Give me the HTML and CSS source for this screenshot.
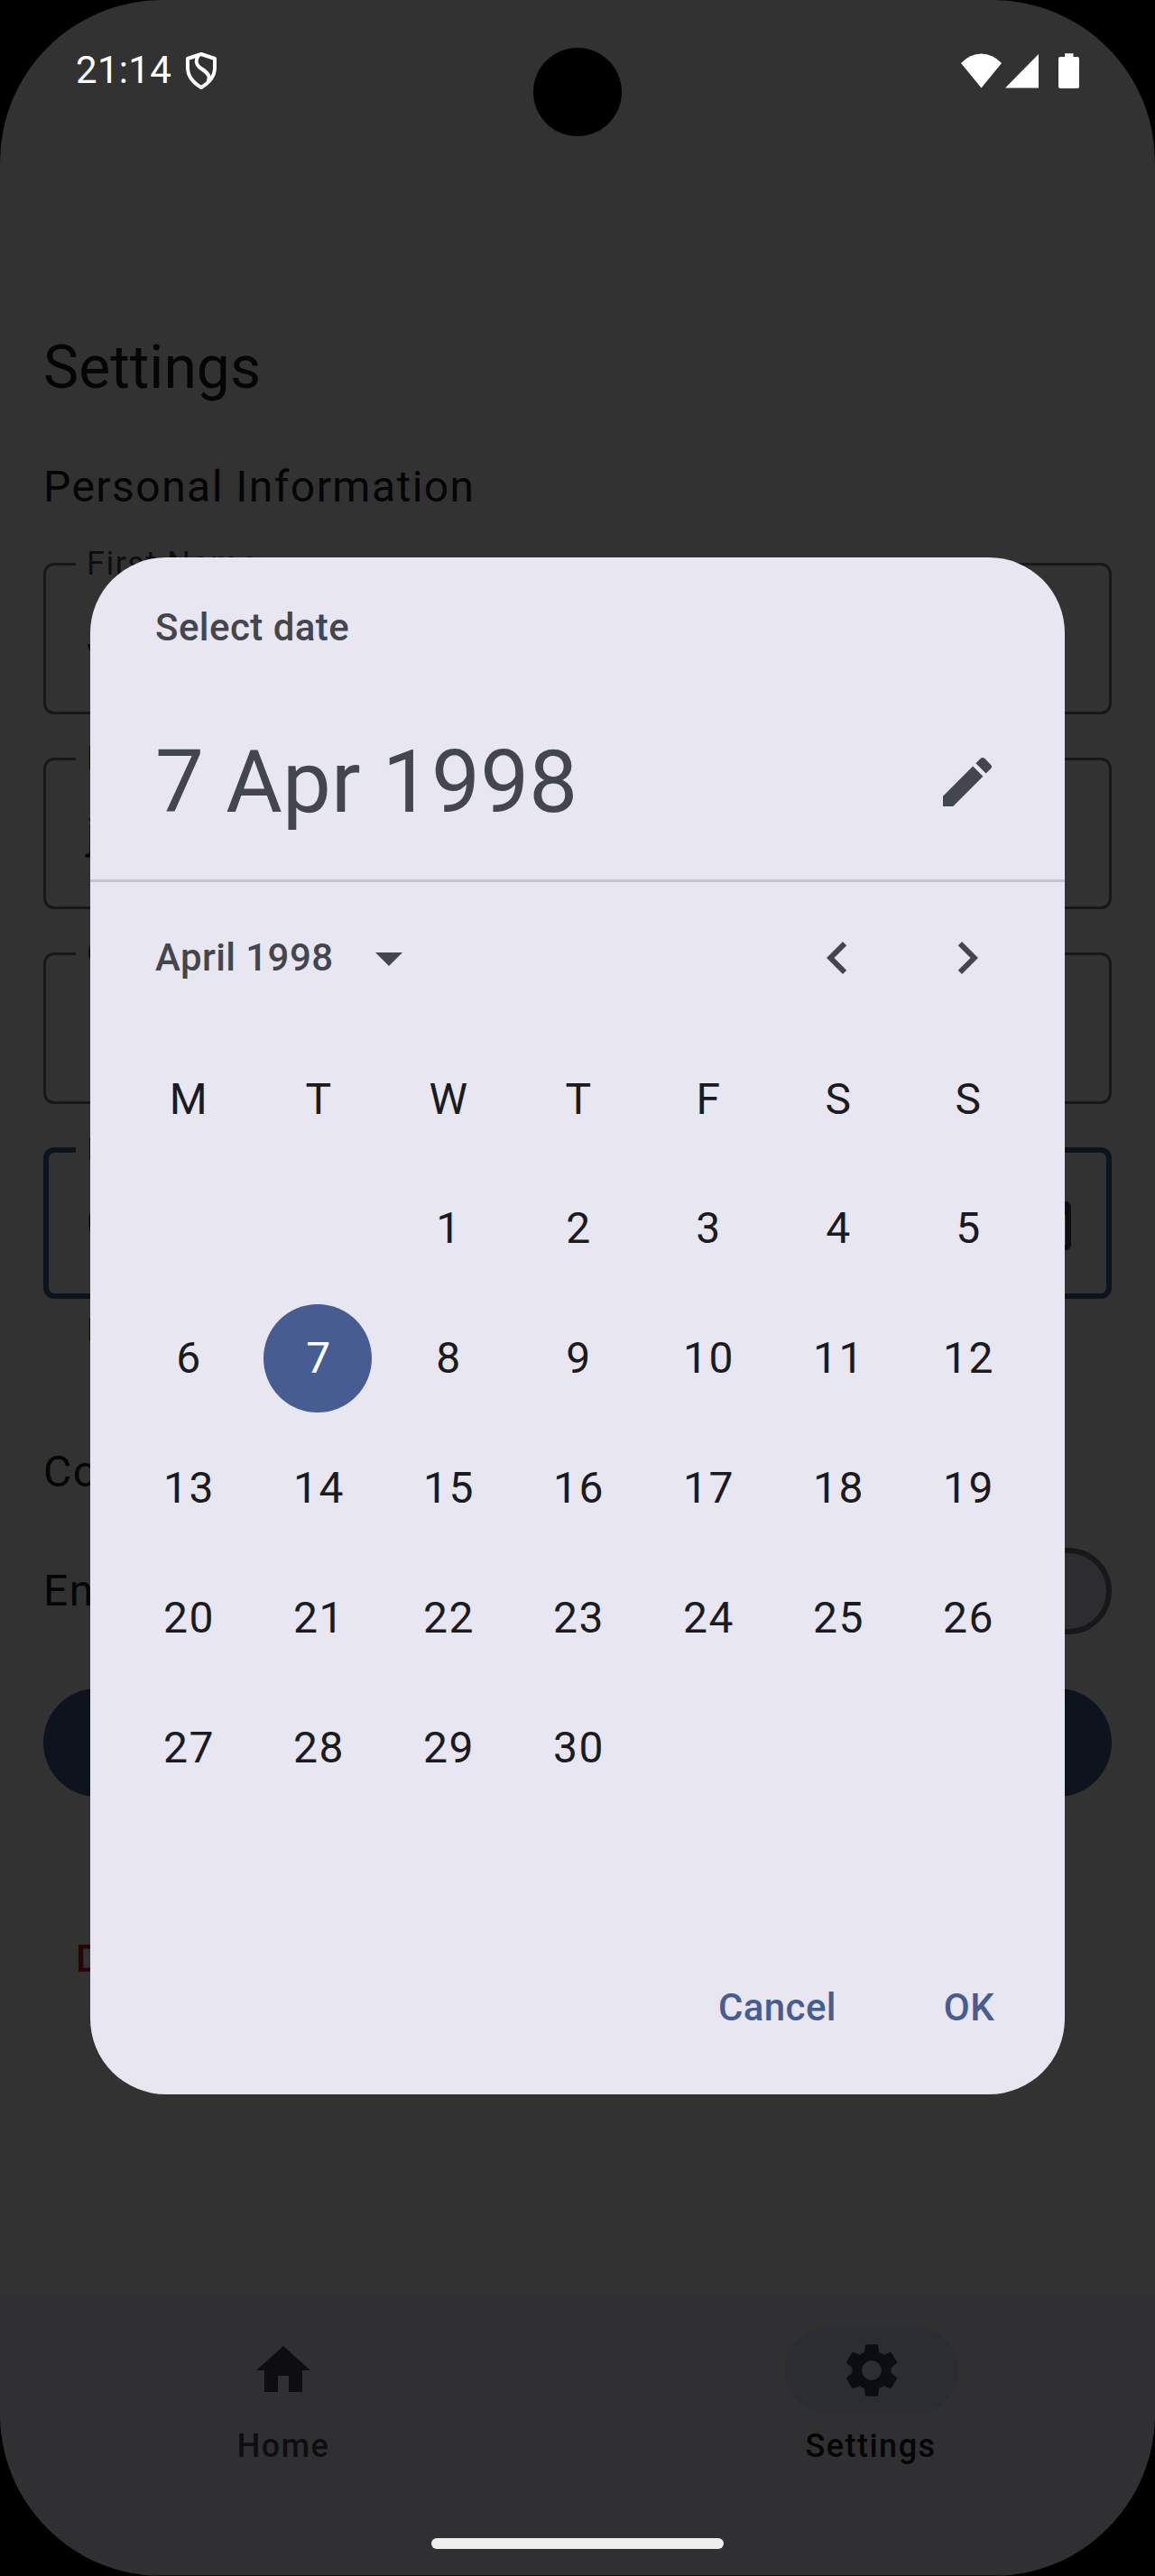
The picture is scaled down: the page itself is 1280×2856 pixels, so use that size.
FILE: index.html
```html
<!DOCTYPE html>
<html lang="en">
<head>
<meta charset="utf-8">
<title>Settings</title>
<link rel="stylesheet" href="styles.css">
</head>
<body>
<div class="screen">
  <header class="status-bar">
    <div class="status-left">
      <span class="clock">21:14</span>
      <svg class="shield" width="36" height="42" viewBox="0 0 36 42" fill="none" stroke="#fff" stroke-width="4" stroke-linejoin="round" stroke-linecap="round"><path d="M18 3 3 8v10c0 9 5 16 15 22 10-6 15-13 15-22V8z"/><path d="M15 4c-4 7-3 11 3 15s11 8 8 13"/></svg>
    </div>
    <svg class="status-icons" width="134" height="42" viewBox="0 0 134 42" fill="#fff"><path d="M2 13Q12 2.500 24.500 2.500T47 13L24.500 40.500z"/><path d="M51 40.500 88 3v37.500z"/><path d="M117 2.200h9.500V6h4.500q2 0 2 2v31q0 2-2 2h-19q-2 0-2-2V8q0-2 2-2h5z"/></svg>
  </header>

  <main class="content">
    <h1 class="page-title">Settings</h1>
    <h2 class="section-title">Personal Information</h2>
    <form class="fields">
      <fieldset class="field"><legend>First Name</legend><span class="value">J</span></fieldset>
      <fieldset class="field"><legend>L</legend><span class="value">j</span></fieldset>
      <fieldset class="field"><legend>G</legend></fieldset>
      <fieldset class="field focused"><legend>D</legend><span class="value">0</span>
        <svg class="field-icon" width="72" height="72" viewBox="0 0 24 24"><path d="M9 11H7v2h2v-2zm4 0h-2v2h2v-2zm4 0h-2v2h2v-2zm2-7h-1V2h-2v2H8V2H6v2H5c-1.110 0-1.990.900-1.990 2L3 20c0 1.100.890 2 2 2h14c1.100 0 2-.900 2-2V6c0-1.100-.900-2-2-2zm0 16H5V9h14v11z"/></svg>
      </fieldset>
    </form>
    <p class="hint">D</p>
    <h2 class="section-title config">Co</h2>
    <div class="toggle-row"><span>En</span><span class="switch"></span></div>
    <div class="save-button"></div>
    <div class="delete-button">D</div>
  </main>

  <nav class="nav-bar">
    <div class="nav-item">
      <span class="indicator"><svg width="72" height="72" viewBox="0 0 24 24"><path d="M10 20v-6h4v6h5v-8h3L12 3 2 12h3v8z"/></svg></span>
      <span class="nav-label">Home</span>
    </div>
    <div class="nav-item active">
      <span class="indicator"><svg width="72" height="72" viewBox="0 0 24 24"><path d="M19.140 12.940c.040-.300.060-.610.060-.940 0-.320-.020-.640-.070-.940l2.030-1.580c.180-.140.230-.410.120-.610l-1.920-3.320c-.120-.220-.370-.290-.590-.220l-2.390.960c-.500-.380-1.030-.700-1.620-.940l-.360-2.540c-.040-.240-.240-.410-.480-.410h-3.840c-.240 0-.430.170-.470.410l-.360 2.540c-.590.240-1.130.570-1.620.940l-2.390-.960c-.220-.080-.470 0-.590.220L2.740 8.870c-.120.210-.080.470.120.610l2.030 1.580c-.050.300-.090.630-.090.940s.020.640.070.940l-2.030 1.580c-.180.140-.230.410-.120.610l1.920 3.320c.120.220.370.290.590.220l2.390-.960c.500.380 1.030.700 1.620.940l.360 2.540c.050.240.240.410.480.410h3.840c.240 0 .440-.170.470-.410l.360-2.540c.590-.240 1.130-.560 1.620-.940l2.390.960c.220.080.470 0 .590-.220l1.920-3.320c.120-.220.070-.470-.120-.610l-2.010-1.580zM12 15.600c-1.980 0-3.600-1.620-3.600-3.600s1.620-3.600 3.600-3.600 3.600 1.620 3.600 3.600-1.620 3.600-3.600 3.600z"/></svg></span>
      <span class="nav-label">Settings</span>
    </div>
  </nav>

  <section class="dialog">
    <div class="dialog-head">
      <div class="dialog-title">Select date</div>
      <div class="headline-row">
        <span class="headline">7 Apr 1998</span>
        <svg width="72" height="72" viewBox="0 0 24 24"><path d="M3 17.250V21h3.750L17.810 9.940l-3.750-3.750L3 17.250zM20.710 7.040c.390-.390.390-1.020 0-1.410l-2.340-2.340c-.390-.390-1.020-.390-1.410 0l-1.830 1.830 3.750 3.750 1.830-1.830z"/></svg>
      </div>
    </div>
    <div class="month-row">
      <span class="month">April 1998</span>
      <svg class="caret" width="72" height="72" viewBox="0 0 24 24"><path d="M7 10l5 5 5-5z"/></svg>
      <svg class="arrow" width="72" height="72" viewBox="0 0 24 24"><path d="M15.410 16.590 10.830 12l4.580-4.590L14 6l-6 6 6 6z"/></svg>
      <svg class="arrow" width="72" height="72" viewBox="0 0 24 24"><path d="M8.590 16.590 13.170 12 8.590 7.410 10 6l6 6-6 6z"/></svg>
    </div>
    <div class="calendar">
      <span class="weekday">M</span><span class="weekday">T</span><span class="weekday">W</span><span class="weekday">T</span><span class="weekday">F</span><span class="weekday">S</span><span class="weekday">S</span>
      <span class="first">1</span><span>2</span><span>3</span><span>4</span><span>5</span>
      <span>6</span><span class="selected">7</span><span>8</span><span>9</span><span>10</span><span>11</span><span>12</span>
      <span>13</span><span>14</span><span>15</span><span>16</span><span>17</span><span>18</span><span>19</span>
      <span>20</span><span>21</span><span>22</span><span>23</span><span>24</span><span>25</span><span>26</span>
      <span>27</span><span>28</span><span>29</span><span>30</span>
    </div>
    <div class="actions"><span class="cancel">Cancel</span><span class="ok">OK</span></div>
  </section>

  <div class="camera"></div>
  <div class="home-handle"></div>
</div>
</body>
</html>
```
FILE: styles.css
```css
* { box-sizing: border-box; }
body { margin: 0; background: #000; font-family: Roboto, sans-serif; }
h1, h2, p { margin: 0; font-weight: 400; }
svg { display: block; flex: none; }

.screen {
  position: relative;
  display: flex;
  flex-direction: column;
  width: 1280px;
  height: 2856px;
  overflow: hidden;
  border-radius: 180px;
  background: #323232;
  color: #050506;
}

/* Status bar */
.status-bar {
  display: flex;
  justify-content: space-between;
  align-items: center;
  height: 156px;
  padding: 0 83px 0 84px;
}
.status-left { display: flex; align-items: center; gap: 15px; }
.clock { font-size: 42px; line-height: 50px; letter-spacing: .3px; color: #fff; }

/* Page */
.content { flex: 1; padding: 210px 48px 0; }
.page-title { font-size: 66px; line-height: 84px; }
.section-title {
  margin-top: 54px;
  font-size: 48px;
  line-height: 72px;
  letter-spacing: 1.46px;
}
.fields { display: grid; gap: 48px; margin-top: 48px; }
.field {
  display: flex;
  align-items: center;
  height: 189px;
  min-width: 0;
  margin: -21px 0 0;
  padding: 0 33px 21px;
  border: 3px solid #171819;
  border-radius: 12px;
}
.field legend {
  padding: 0 12px;
  font-size: 36px;
  line-height: 45px;
  letter-spacing: 1.5px;
  color: #0e0e10;
}
.value { flex: 1; font-size: 48px; line-height: 72px; letter-spacing: 1.5px; padding-left: 12px; }
.field.focused { border-width: 6px; padding: 0 30px 21px; border-color: #0e131d; }
.focused legend { line-height: 48px; color: #0e131d; }
.field-icon { fill: #0e0e10; }
.hint { padding: 11px 48px 0; font-size: 36px; line-height: 48px; letter-spacing: 1.2px; color: #0e0e10; }
.config { margin-top: 97px; }
.toggle-row {
  display: flex;
  justify-content: space-between;
  align-items: center;
  height: 96px;
  margin-top: 48px;
  font-size: 48px;
  line-height: 72px;
  letter-spacing: 1.5px;
}
.switch {
  width: 156px;
  height: 96px;
  border: 6px solid #171819;
  border-radius: 48px;
  background: #2d2d2f;
}
.save-button { height: 120px; margin-top: 60px; border-radius: 60px; background: #0e131d; }
.delete-button {
  margin-top: 144px;
  padding-left: 36px;
  font-size: 42px;
  line-height: 72px;
  font-weight: 500;
  color: #270504;
}

/* Bottom navigation */
.nav-bar {
  display: flex;
  gap: 24px;
  height: 312px;
  padding-top: 36px;
  background: #302f31;
  border-bottom: 1px solid #0c0c0c;
}
.nav-item { flex: 1; display: flex; flex-direction: column; align-items: center; gap: 12px; color: #0e0e10; }
.indicator {
  display: flex;
  align-items: center;
  justify-content: center;
  width: 192px;
  height: 96px;
  border-radius: 48px;
  fill: #0e0e10;
}
.nav-label { font-size: 36px; line-height: 48px; font-weight: 500; letter-spacing: 1.5px; }
.active { color: #050506; }
.active .nav-label { margin-right: 2px; }
.active .indicator { background: #2c2d32; fill: #0c0d12; }

/* Date picker */
.dialog {
  position: absolute;
  left: 100px;
  top: 618px;
  display: flex;
  flex-direction: column;
  width: 1080px;
  height: 1704px;
  border-radius: 84px;
  background: #e8e6f0;
  color: #44464f;
  fill: #44464f;
}
.dialog-head { height: 360px; padding: 48px 72px 0; border-bottom: 3px solid #c5c5d0; }
.dialog-title { font-size: 42px; line-height: 60px; font-weight: 500; letter-spacing: .45px; }
.headline-row {
  display: flex;
  justify-content: space-between;
  align-items: center;
  height: 120px;
  margin-top: 81px;
}
.headline { font-size: 96px; line-height: 120px; letter-spacing: .2px; }
.month-row { display: flex; align-items: center; height: 168px; padding: 0 72px; }
.month { font-size: 42px; line-height: 60px; font-weight: 500; letter-spacing: .42px; }
.caret { margin: 0 auto 0 26px; }
.arrow + .arrow { margin-left: 72px; }
.calendar {
  display: grid;
  grid-template-columns: repeat(7, 144px);
  grid-auto-rows: 144px;
  height: 1008px;
  padding: 0 36px;
  place-items: center;
  font-size: 48px;
  line-height: 56px;
  letter-spacing: 1.5px;
  color: #1a1b20;
}
.calendar span { padding-left: 3px; }
.calendar .weekday { padding-top: 2px; }
.first { grid-column: 3; }
.calendar .selected {
  width: 120px;
  height: 120px;
  border-radius: 50%;
  line-height: 120px;
  text-align: center;
  background: #475d92;
  color: #fff;
}
.actions {
  display: flex;
  justify-content: flex-end;
  gap: 24px;
  padding-right: 19px;
  font-size: 42px;
  line-height: 144px;
  font-weight: 500;
  letter-spacing: .42px;
  color: #475d92;
}
.cancel { padding: 0 36px; }
.ok { width: 174px; text-align: center; }

/* Device overlays */
.camera {
  position: absolute;
  left: 591px;
  top: 53px;
  width: 98px;
  height: 98px;
  border-radius: 50%;
  background: #000;
}
.home-handle {
  position: absolute;
  left: 478px;
  top: 2814px;
  width: 324px;
  height: 12px;
  border-radius: 6px;
  background: #eee;
}
```
